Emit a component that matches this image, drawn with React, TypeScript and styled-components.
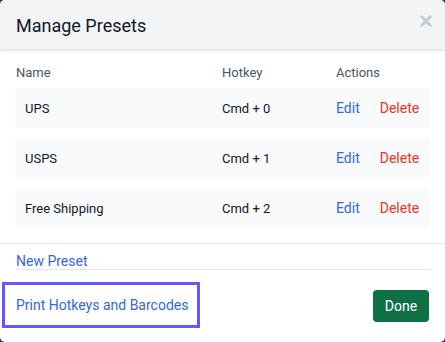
import React from "react";
import styled, { createGlobalStyle } from "styled-components";

const Global = createGlobalStyle`
  html, body { margin: 0; padding: 0; background: #3a3a3a; }
  body { font-family: Roboto, "Noto Sans", Arial, sans-serif; }
  * { box-sizing: border-box; }
`;

const Modal = styled.div`
  width: 445px;
  height: 342px;
  background: #ffffff;
  border-radius: 5px;
  overflow: hidden;
  display: flex;
  flex-direction: column;
`;

const Header = styled.div`
  height: 49px;
  flex: none;
  background: #f3f4f6;
  box-shadow: 0 1px 3px rgba(0, 0, 0, 0.18);
  display: flex;
  align-items: center;
  justify-content: space-between;
  padding: 0 16px 0 16px;
  position: relative;
  z-index: 1;
`;

const Title = styled.h2`
  margin: 0;
  font-size: 18px;
  font-weight: 400;
  color: #111827;
  padding-top: 2px;
`;

const Close = styled.button`
  border: none;
  background: none;
  padding: 0;
  margin-top: -8px;
  margin-right: -3px;
  color: #c5cad0;
  display: flex;
  cursor: pointer;
`;

const Body = styled.div`
  padding: 8px 15px 0 15px;
  display: flex;
  flex-direction: column;
`;

const HeadRow = styled.div`
  display: grid;
  grid-template-columns: 206px 114px 1fr;
  padding-left: 1px;
  height: 31px;
  align-items: center;
  font-size: 13px;
  color: #4b5563;
`;

const Rows = styled.div`
  display: flex;
  flex-direction: column;
  gap: 10px;
`;

const Row = styled.div`
  display: grid;
  grid-template-columns: 197px 114px 1fr;
  padding-left: 10px;
  height: 40px;
  align-items: center;
  background: #f9fafb;
  border-radius: 4px;
  font-size: 13px;
  color: #111827;
`;

const Actions = styled.div`
  display: flex;
  gap: 20px;
  font-size: 14px;
`;

const ActionLink = styled.a<{ $danger?: boolean }>`
  color: ${(p) => (p.$danger ? "#e8361f" : "#2c6be0")};
  text-decoration: none;
  cursor: pointer;
`;

const Divider = styled.hr`
  margin: 15px 0 0 0;
  border: none;
  border-top: 1px solid #e5e7eb;
`;

const NewRow = styled.div`
  margin: 0 15px 0 16px;
  height: 26px;
  display: flex;
  align-items: flex-end;
  padding-bottom: 0;
  border-bottom: 1px solid #e5e7eb;
  font-size: 14px;
`;

const BlueLink = styled.a`
  color: #3468d9;
  text-decoration: none;
  cursor: pointer;
`;

const Footer = styled.div`
  display: flex;
  align-items: center;
  justify-content: space-between;
  padding: 12px 16px 0 2px;
`;

const FocusLink = styled.a`
  outline: 3px solid #6358fd;
  outline-offset: -3px;
  width: 198px;
  padding: 0 0 0 14px;
  height: 46px;
  display: flex;
  align-items: center;
  color: #3468d9;
  font-size: 14px;
  cursor: pointer;
`;

const Done = styled.button`
  background: #107045;
  color: #ffffff;
  border: none;
  border-radius: 4px;
  width: 56px;
  height: 32px;
  font-family: inherit;
  font-size: 14px;
  cursor: pointer;
  margin-top: 1px;
`;

const presets = [
  { name: "UPS", key: "Cmd + 0" },
  { name: "USPS", key: "Cmd + 1" },
  { name: "Free Shipping", key: "Cmd + 2" },
];

export default function App() {
  return (
    <>
      <Global />
      <Modal>
        <Header>
          <Title>Manage Presets</Title>
          <Close aria-label="Close">
            <svg width="12" height="12" viewBox="0 0 12 12">
              <path d="M1.8 1.8 L10.2 10.2 M10.2 1.8 L1.8 10.2" stroke="currentColor" strokeWidth="2.8" strokeLinecap="round" />
            </svg>
          </Close>
        </Header>
        <Body>
          <HeadRow>
            <span>Name</span>
            <span>Hotkey</span>
            <span>Actions</span>
          </HeadRow>
          <Rows>
            {presets.map((p) => (
              <Row key={p.name}>
                <span>{p.name}</span>
                <span>{p.key}</span>
                <Actions>
                  <ActionLink>Edit</ActionLink>
                  <ActionLink $danger>Delete</ActionLink>
                </Actions>
              </Row>
            ))}
          </Rows>
        </Body>
        <Divider />
        <NewRow>
          <BlueLink>New Preset</BlueLink>
        </NewRow>
        <Footer>
          <FocusLink>Print Hotkeys and Barcodes</FocusLink>
          <Done>Done</Done>
        </Footer>
      </Modal>
    </>
  );
}
